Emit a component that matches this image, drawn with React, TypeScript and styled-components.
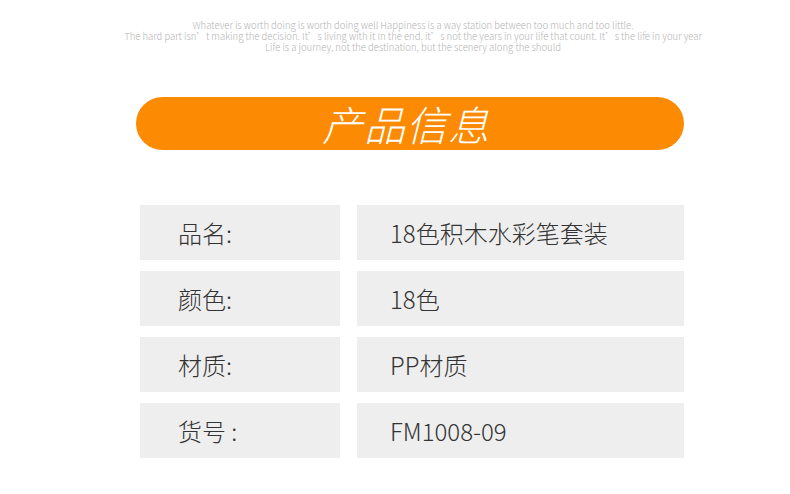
import styled, { createGlobalStyle } from "styled-components";

const GlobalStyle = createGlobalStyle`
    body {
        margin: 0;
        background: #ffffff;
        font-family: "Noto Sans", "Noto Sans CJK SC", sans-serif;
    }
`

const Page = styled.div`
    width: 790px;
    height: 494px;
    background: #ffffff;
    overflow: hidden;
`

const Motto = styled.div`
    padding: 20px 0 0 36px;
    text-align: center;
    font-family: "Noto Sans CJK SC", "Noto Sans", sans-serif;
    font-size: 9.5px;
    font-weight: 300;
    line-height: 11px;
    color: #b4b4b4;
    white-space: nowrap;
`

const Content = styled.div`
    width: 548px;
    margin: 44px 0 0 136px;
`

const Banner = styled.div`
    height: 53px;
    border-radius: 27px / 27px;
    background: #fd8a03;
    display: flex;
    align-items: center;
    justify-content: center;
`

const BannerTitle = styled.h1`
    margin: 0 0 0 -8px;
    font-family: "Noto Sans CJK SC", sans-serif;
    font-size: 41px;
    font-weight: 300;
    font-style: italic;
    color: #ffffff;
    letter-spacing: 1px;
    line-height: 1;
`

const Table = styled.div`
    margin: 55px 0 0 4px;
    display: grid;
    grid-template-columns: 200px 327px;
    grid-auto-rows: 55px;
    column-gap: 17px;
    row-gap: 11px;
`

const Cell = styled.div<{ $pad: number }>`
    background: #eeeeee;
    display: flex;
    align-items: center;
    padding-left: ${(p) => p.$pad}px;
    font-family: "Noto Sans CJK SC", sans-serif;
    font-size: 24px;
    font-weight: 300;
    color: #333333;
    white-space: pre;
`

type Row = {
    label: string
    value: string
}

const rows: Row[] = [
    { label: "品名:", value: "18色积木水彩笔套装" },
    { label: "颜色:", value: "18色" },
    { label: "材质:", value: "PP材质" },
    { label: "货号 :", value: "FM1008-09" },
]

const App = () => {
    return (
        <>
            <GlobalStyle />
            <Page>
                <Motto>
                    <div>Whatever is worth doing is worth doing well Happiness is a way station between too much and too little.</div>
                    <div>The hard part isn’t making the decision. It’s living with it In the end, it’s not the years in your life that count. It’s the life in your year</div>
                    <div>Life is a journey, not the destination, but the scenery along the should</div>
                </Motto>
                <Content>
                    <Banner>
                        <BannerTitle>产品信息</BannerTitle>
                    </Banner>
                    <Table>
                        {rows.map((row) => (
                            <>
                                <Cell key={row.label} $pad={38}>{row.label}</Cell>
                                <Cell key={row.value} $pad={33}>{row.value}</Cell>
                            </>
                        ))}
                    </Table>
                </Content>
            </Page>
        </>
    )
}

export default App;
